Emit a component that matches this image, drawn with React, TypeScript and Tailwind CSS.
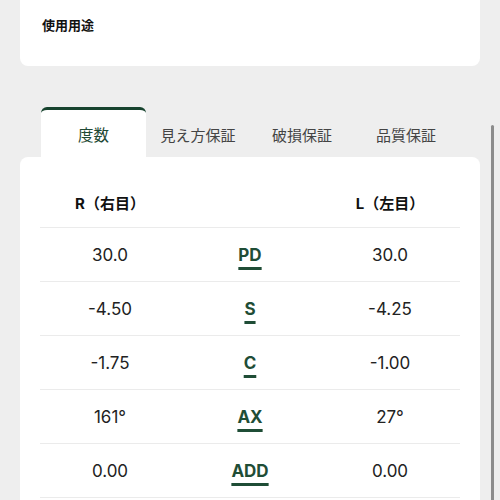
import React from "react";

const tabs = ["度数", "見え方保証", "破損保証", "品質保証"];

const rows = [
  { label: "PD", r: "30.0", l: "30.0" },
  { label: "S", r: "-4.50", l: "-4.25" },
  { label: "C", r: "-1.75", l: "-1.00" },
  { label: "AX", r: "161°", l: "27°" },
  { label: "ADD", r: "0.00", l: "0.00" },
];

const font = {
  fontFamily: '"Inter", "Noto Sans CJK JP", sans-serif',
};

const App = () => {
  return (
    <div
      className="relative w-[500px] h-[500px] overflow-hidden bg-[#eeeeee]"
      style={font}
    >
      <div className="mx-5 h-[66px] rounded-b-lg bg-white px-[22px] pt-[16px]">
        <p className="text-[13px] font-bold text-[#111]">使用用途</p>
      </div>

      <div className="mt-[41px] flex pl-[41px]">
        {tabs.map((t, i) => (
          <div
            key={t}
            className={
              i === 0
                ? "flex h-[50px] w-[105px] items-center justify-center rounded-t-md border-t-[3px] border-[#17432e] bg-white pt-[5px] text-[15.5px] text-[#1f4a35]"
                : "flex h-[50px] w-[104px] items-center justify-center pt-[8px] text-[15px] text-[#444]"
            }
          >
            {t}
          </div>
        ))}
      </div>

      <div className="mx-5 rounded-t-lg bg-white px-5 pb-10">
        <div className="grid h-[71px] grid-cols-3 items-center border-b border-[#ebebeb] pt-[24px]">
          <div className="text-center text-[15px] font-bold text-[#111]">
            R（右目）
          </div>
          <div />
          <div className="text-center text-[15px] font-bold text-[#111]">
            L（左目）
          </div>
        </div>
        {rows.map((row) => (
          <div
            key={row.label}
            className="grid h-[54px] grid-cols-3 items-center border-b border-[#ebebeb] pt-[3px]"
          >
            <div className="text-center text-[17px] text-[#222]">{row.r}</div>
            <div className="text-center">
              <span className="text-[17px] font-bold text-[#1f4d36] underline decoration-[2.5px] underline-offset-[6px]">
                {row.label}
              </span>
            </div>
            <div className="text-center text-[17px] text-[#222]">{row.l}</div>
          </div>
        ))}
      </div>

      <div className="absolute right-[6px] top-[125px] h-[380px] w-[3px] rounded-full bg-[#8c8c8c]" />
    </div>
  );
};

export default App;
